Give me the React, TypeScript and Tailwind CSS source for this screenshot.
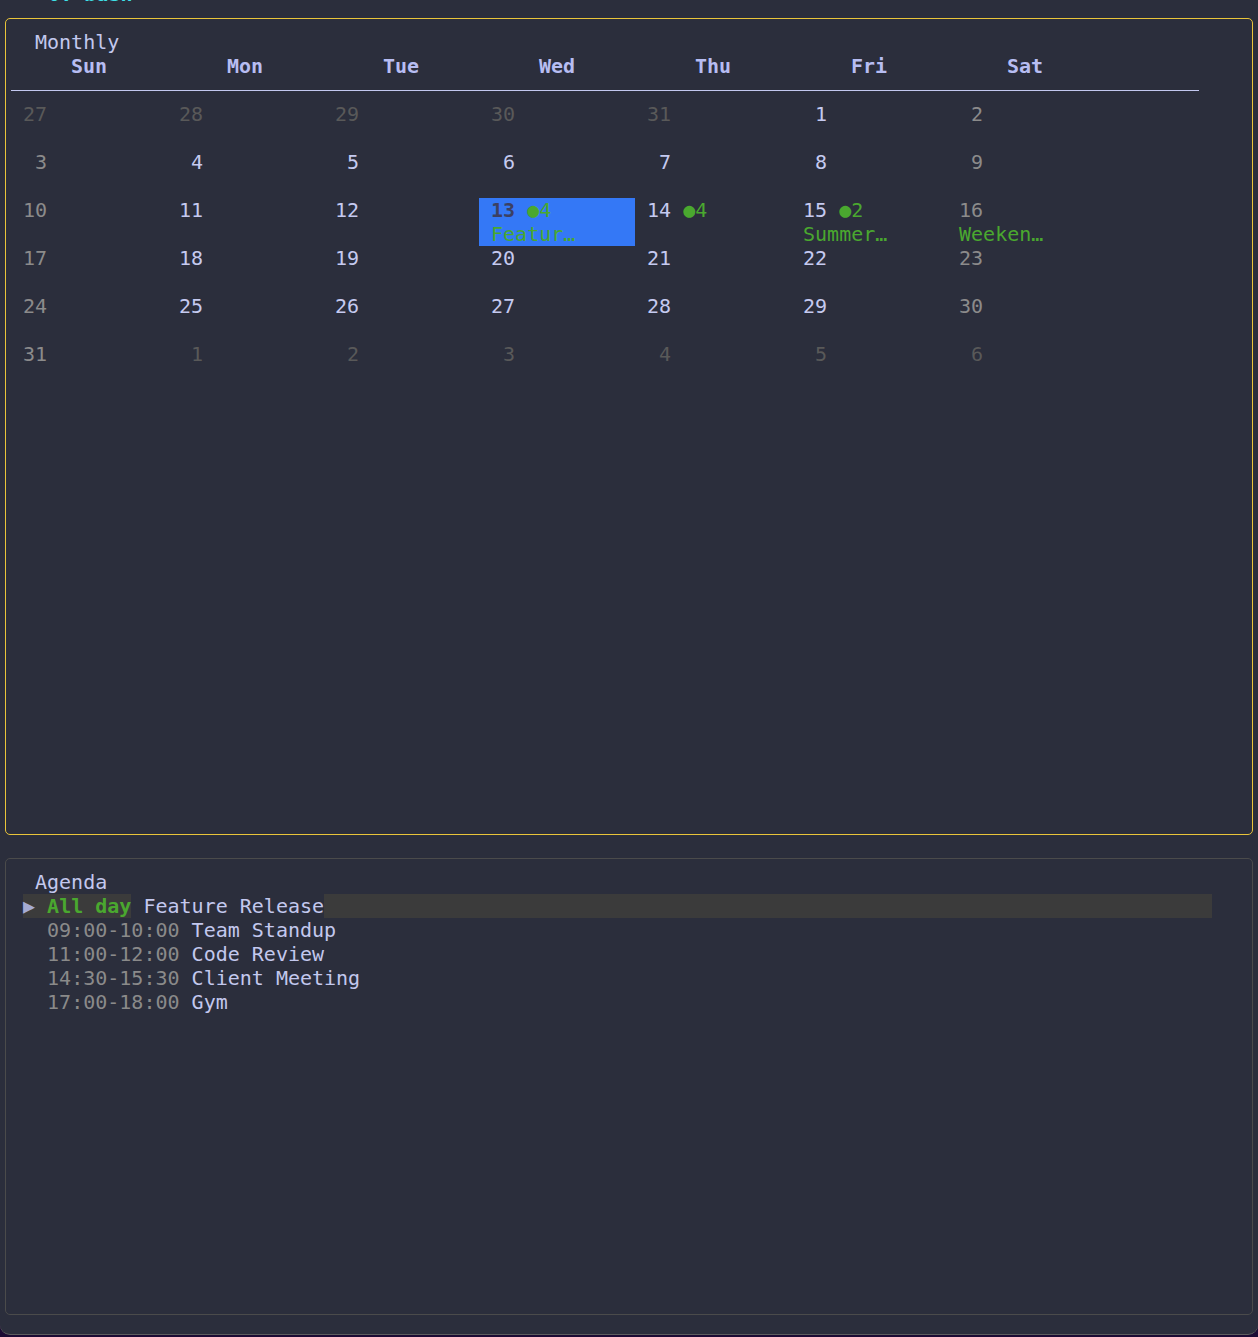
import React from "react";

type Day = { d: number; kind: "prev" | "cur" | "next" };

const events: Record<number, { count?: number; label?: string }> = {
  13: { count: 4, label: "Featur…" },
  14: { count: 4 },
  15: { count: 2, label: "Summer…" },
  16: { label: "Weeken…" },
};

const days: Day[] = [
  ...[27, 28, 29, 30, 31].map((d) => ({ d, kind: "prev" as const })),
  ...Array.from({ length: 31 }, (_, i) => ({ d: i + 1, kind: "cur" as const })),
  ...[1, 2, 3, 4, 5, 6].map((d) => ({ d, kind: "next" as const })),
];

const weekdays = ["Sun", "Mon", "Tue", "Wed", "Thu", "Fri", "Sat"];

const agenda = [
  { time: "09:00-10:00", title: "Team Standup" },
  { time: "11:00-12:00", title: "Code Review" },
  { time: "14:30-15:30", title: "Client Meeting" },
  { time: "17:00-18:00", title: "Gym" },
];

const SELECTED = 13;

const DayCell = ({ day, col }: { day: Day; col: number }) => {
  const ev = day.kind === "cur" ? events[day.d] : undefined;
  const selected = day.kind === "cur" && day.d === SELECTED;
  const weekend = col === 0 || col === 6;

  let dateColor = "text-[#c5caf0]";
  if (day.kind !== "cur") dateColor = "text-[#595959]";
  else if (weekend) dateColor = "text-[#8b8b8b]";
  if (selected) dateColor = "text-[#3c4062] font-bold";

  return (
    <div
      className={`w-[156px] h-[48px] whitespace-pre ${
        selected ? "bg-[#3478f6]" : ""
      }`}
    >
      <div className="h-[24px]">
        <span className={dateColor}>{" " + String(day.d).padStart(2, " ")}</span>
        {ev?.count && (
          <span className="text-[#4aa82f]">{" ●" + ev.count}</span>
        )}
      </div>
      <div className="h-[24px] text-[#4aa82f]">
        {ev?.label ? " " + ev.label : ""}
      </div>
    </div>
  );
};

export default function App() {
  const weeks: Day[][] = [];
  for (let i = 0; i < days.length; i += 7) weeks.push(days.slice(i, i + 7));

  return (
    <div
      className="w-[1258px] h-[1337px] bg-[#1c0b34] overflow-hidden text-[20px] leading-[24px]"
      style={{ fontFamily: '"DejaVu Sans Mono", "Liberation Mono", monospace' }}
    >
      <div className="h-[1335px] bg-[#2b2e3c] rounded-b-[10px] border-b border-[#5e5e5e] overflow-hidden">
        {/* previous shell line, mostly scrolled out */}
        <div className="h-[5px] overflow-hidden">
          <div className="-mt-[18px] h-[24px] whitespace-pre">
            <span className="text-[#8a8a8a]">{"  ‹ "}</span>
            <span className="text-[#3ee0e8] font-bold">0: bash</span>
          </div>
        </div>

        {/* Monthly panel */}
        <div className="mt-[13px] mx-[5px] h-[817px] border border-[#e9c43a] rounded-[5px] pt-[11px] pl-[5px]">
          <div className="pl-[24px] h-[24px] text-[#c3c8ee]">Monthly</div>
          <div className="flex h-[24px] font-bold text-[#b7bdf2]">
            {weekdays.map((w) => (
              <div key={w} className="w-[156px] text-center">
                {w}
              </div>
            ))}
          </div>
          <div className="h-[24px] pt-[12px]">
            <div className="w-[1188px] h-px bg-[#c3c8f0]" />
          </div>
          {weeks.map((week, wi) => (
            <div key={wi} className="flex">
              {week.map((day, ci) => (
                <DayCell key={ci} day={day} col={ci} />
              ))}
            </div>
          ))}
        </div>

        {/* Agenda panel */}
        <div className="mt-[23px] mx-[5px] h-[457px] border border-[#4b4b4b] rounded-[5px] pt-[11px] pl-[17px]">
          <div className="pl-[12px] h-[24px] text-[#c3c8ee]">Agenda</div>
          <div className="flex h-[24px] whitespace-pre">
            <span className="bg-[#3b3b3b]">
              <span className="text-[#a5abd3]">{"▶ "}</span>
              <span className="text-[#4aa82f] font-bold">All day</span>
            </span>
            <span className="text-[#c3c8ee]">{" Feature Release"}</span>
            <span className="w-[888px] bg-[#3b3b3b]" />
          </div>
          {agenda.map((a) => (
            <div key={a.time} className="h-[24px] whitespace-pre">
              <span className="text-[#8a8a8a]">{"  " + a.time}</span>
              <span className="text-[#c3c8ee]">{" " + a.title}</span>
            </div>
          ))}
        </div>
      </div>
    </div>
  );
}
